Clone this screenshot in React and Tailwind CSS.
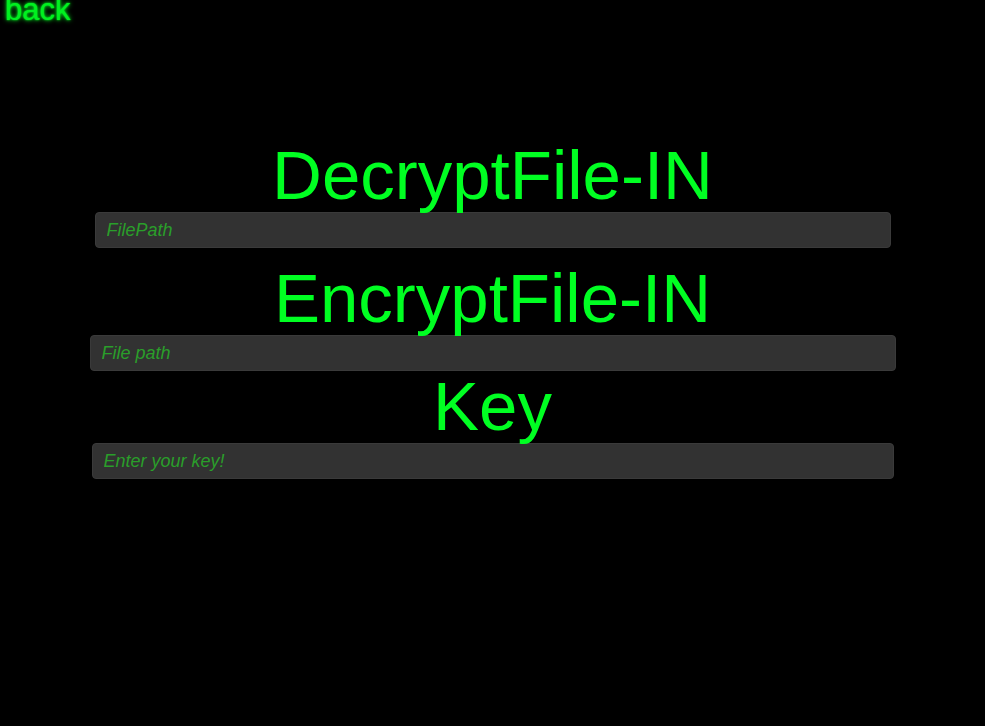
import { useState } from 'react';

const Field = ({ placeholder, width }) => {
  const [value, setValue] = useState('');
  return (
    <input
      value={value}
      onChange={(e) => setValue(e.target.value)}
      placeholder={placeholder}
      className={`${width} h-[36px] mx-auto block rounded-[4px] border border-[#3a3a3a] bg-[#323232] pl-[11px] pr-3 text-[18px] italic text-[#22c022] placeholder:text-[#2a9e2a] outline-none`}
    />
  );
};

const Heading = ({ children, className = '' }) => (
  <h1 className={`text-center text-[69px] leading-[73px] text-[#00ff22] ${className}`}>
    {children}
  </h1>
);

export default function App() {
  return (
    <div
      className="flex min-h-screen flex-col bg-black"
      style={{ fontFamily: '"Liberation Sans", Arial, sans-serif' }}
    >
      <button className="self-start pl-[5px] -mt-[7px] text-[31px] leading-[34px] text-[#00f020] [text-shadow:0_0_5px_#00ff22,0_0_2px_#00ff22]">
        back
      </button>

      <div className="pt-[112px]">
        <Heading>DecryptFile-IN</Heading>
        <Field placeholder="FilePath" width="w-[796px]" />

        <Heading className="mt-[14px]">EncryptFile-IN</Heading>
        <Field placeholder="File path" width="w-[806px]" />

        <Heading className="-mt-[1px]">Key</Heading>
        <Field placeholder="Enter your key!" width="w-[802px]" />
      </div>
    </div>
  );
}
